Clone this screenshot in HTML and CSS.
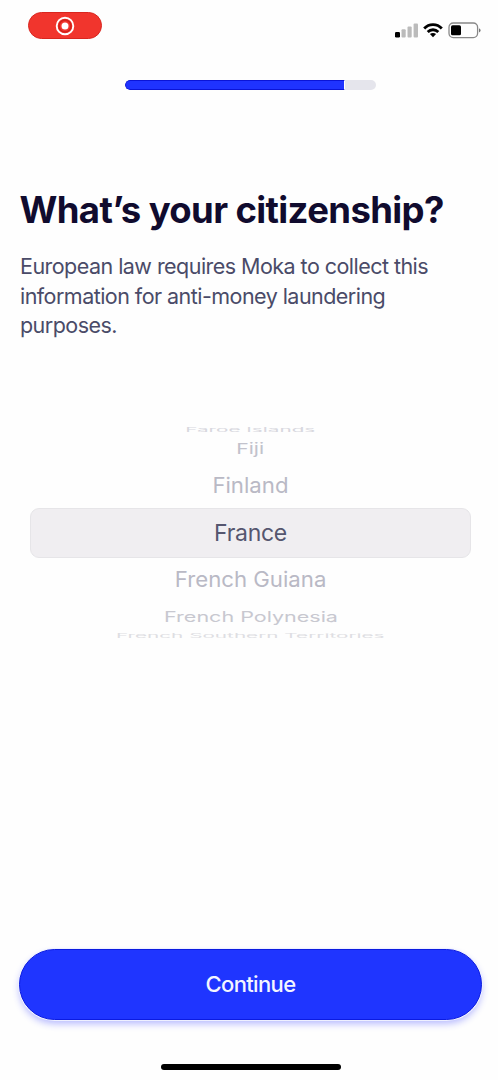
FILE: index.html
```html
<!DOCTYPE html>
<html lang="en">
<head>
<meta charset="utf-8">
<title>What’s your citizenship?</title>
<link rel="stylesheet" href="styles.css">
</head>
<body>
<main class="screen">
  <header class="status">
    <div class="recording">
      <svg width="20" height="20" viewBox="0 0 20 20"><circle cx="10" cy="10" r="8.3" fill="none" stroke="#fff" stroke-width="1.9"/><circle cx="10" cy="10" r="6" fill="none" stroke="#d3211b" stroke-width="1.6"/><circle cx="10" cy="10" r="3.5" fill="#fff"/></svg>
    </div>
    <div class="indicators">
      <svg class="signal" width="24" height="15" viewBox="0 0 24 15"><rect x="0" y="9" width="5" height="5.5" rx="1.2" fill="#000"/><rect x="6.5" y="6.3" width="4.2" height="8.2" rx="1" fill="#bbb"/><rect x="12.5" y="3.4" width="4.2" height="11.1" rx="1" fill="#bbb"/><rect x="18.6" y="0.4" width="4.4" height="14.1" rx="1" fill="#bbb"/></svg>
      <svg class="wifi" width="20" height="15" viewBox="0 0 20 15"><g fill="none" stroke="#000" stroke-width="2.8"><path d="M1.2 5.5C6 .4 14 .4 18.8 5.5"/><path d="M4.7 9C7.7 6 12.3 6 15.3 9"/></g><path d="M6.9 11.1C8.6 9.7 11.4 9.7 13.1 11.1L10 14.3Z"/></svg>
      <svg class="battery" width="34" height="17" viewBox="0 0 34 17"><rect x="1" y="1" width="28.6" height="14.6" rx="4.3" fill="none" stroke="#888" stroke-width="1.3"/><rect x="3" y="3.3" width="10" height="10" rx="1.6"/><path d="M31.2 6.2C33 7 33 9.6 31.2 10.4Z" fill="#555"/></svg>
    </div>
  </header>
  <div class="progress"><div class="progress-fill"></div></div>
  <h1 class="title">What’s your citizenship?</h1>
  <p class="intro">European law requires Moka to collect this<br>information for anti-money laundering<br>purposes.</p>
  <div class="picker">
    <div class="row edge-top"><span>Faroe Islands</span></div>
    <div class="row far-top"><span>Fiji</span></div>
    <div class="row near-top"><span>Finland</span></div>
    <div class="row selected"><span>France</span></div>
    <div class="row near-bottom"><span>French Guiana</span></div>
    <div class="row far-bottom"><span>French Polynesia</span></div>
    <div class="row edge-bottom"><span>French Southern Territories</span></div>
  </div>
  <button class="continue">Continue</button>
  <div class="home"></div>
</main>
</body>
</html>
```
FILE: styles.css
```css
* { box-sizing: border-box; }
body { margin: 0; background: #fefefe; font-family: Inter, "Liberation Sans", sans-serif; }
.screen { display: flex; flex-direction: column; width: 498px; height: 1080px; overflow: hidden; }
.status { display: flex; justify-content: space-between; align-items: flex-start; height: 80px; padding: 12px 16px 0 28px; }
.recording { display: flex; align-items: center; justify-content: center; width: 74px; height: 27px; border: 1px solid #d9261f; border-radius: 13.5px; background: #f1352d; }
.indicators { display: flex; align-items: center; padding-top: 10px; }
.wifi { margin: 0 5px 0 4px; }
.progress { width: 251px; height: 10px; margin-left: 125px; border-radius: 5px; background: #e5e5ec; overflow: hidden; }
.progress-fill { width: 220px; height: 10px; border: solid #0a14d8; border-width: 1px 0 1px 1px; border-right: 1px solid #fff; border-radius: 5px 0 0 5px; background: #1f33ff; }
.title { margin: 97px 0 0 19.5px; font-size: 36.5px; line-height: 46px; font-weight: 700; letter-spacing: -0.62px; color: #100b2e; white-space: nowrap; }
.intro { margin: 19px 0 0 20px; font-size: 21.5px; line-height: 29.6px; letter-spacing: -0.54px; color: #4a4b68; white-space: nowrap; }
.picker { display: flex; flex-direction: column; margin: 83px 27px 0 30px; font-size: 23px; color: #b9b9c5; }
.row { display: flex; align-items: center; justify-content: center; white-space: nowrap; }
.row span { display: block; line-height: 30px; }
.edge-top { height: 9px; padding-top: 3px; overflow: hidden; color: #d8d8de; }
.edge-top span { transform: scale(.9, .24); }
.far-top { height: 32px; color: #c2c2cc; }
.far-top span { transform: scale(.92, .65); }
.near-top { height: 43px; }
.near-top span { transform: scale(.965, .92); }
.selected { height: 50px; border: 1px solid #e6e5e8; border-radius: 9px; background: #f0eef1; color: #55566f; letter-spacing: -.3px; }
.near-bottom { height: 45px; }
.near-bottom span { transform: scale(.965, .92); }
.far-bottom { height: 29px; color: #c8c8d0; }
.far-bottom span { transform: scale(.935, .63); }
.edge-bottom { height: 8px; overflow: hidden; color: #dedee3; }
.edge-bottom span { transform: scale(.9, .24); }
.continue { width: 463px; height: 71px; margin: 309px 0 0 19px; padding: 0; border: 1.5px solid #0b1be0; border-radius: 36px; background: #1f35ff; box-shadow: 0 0 0 1px #eef0ff, 0 4px 7px rgba(40, 50, 255, .32); color: #f4f5ff; font: 500 22px Inter, "Liberation Sans", sans-serif; letter-spacing: -.65px; }
.home { width: 180px; height: 6px; margin: 44px 0 0 161px; border-radius: 3px; background: #000; }
```
